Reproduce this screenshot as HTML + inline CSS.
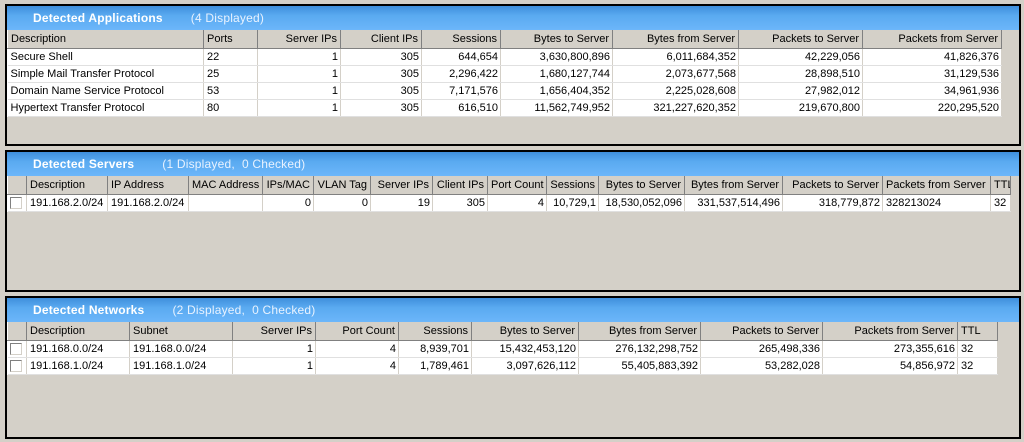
<!DOCTYPE html><html><head><style>
*{margin:0;padding:0;box-sizing:border-box}
body{width:1024px;height:442px;background:#d4d0c8;font-family:"Liberation Sans",sans-serif;font-size:11px;position:relative;overflow:hidden}
.p{position:absolute;left:5px;width:1016px;border:2px solid #000;border-top-color:#000;background:#d4d0c8}
.h{height:24px;background:linear-gradient(#3f8fdc,#5aaaf0 40%,#6cb6fa);color:#fff;font-weight:bold;font-size:12px;line-height:24px;padding-left:26px;white-space:pre;letter-spacing:.2px}
.h span{font-weight:normal;color:#e8f2ff;margin-left:28px}
table{position:absolute;left:0;border-collapse:collapse;table-layout:fixed;background:#fff}
th{height:18px;background:#d4d0c8;font-weight:normal;text-align:left;padding:0 3px;border-right:1px solid #808080;border-left:1px solid #fff;border-bottom:1px solid #808080;white-space:nowrap;overflow:hidden}
td{height:17px;padding:0 2px 0 3px;border-right:1px solid #d4d0c8;border-bottom:1px solid #e0e0e0;white-space:nowrap;overflow:hidden}
.r{text-align:right}
.cb{display:inline-block;width:12px;height:12px;border:1px solid #808080;border-right-color:#d4d0c8;border-bottom-color:#d4d0c8;background:#fff;vertical-align:middle}
</style></head><body>
<div class="p" style="top:4px;height:142px">
<div class="h">Detected Applications<span>(4 Displayed)</span></div>
<table style="top:24px;width:994px">
<col style="width:196px"><col style="width:54px"><col style="width:83px"><col style="width:81px"><col style="width:79px"><col style="width:112px"><col style="width:126px"><col style="width:124px"><col style="width:139px">
<tr><th>Description</th><th>Ports</th><th class="r">Server IPs</th><th class="r">Client IPs</th><th class="r">Sessions</th><th class="r">Bytes to Server</th><th class="r">Bytes from Server</th><th class="r">Packets to Server</th><th class="r">Packets from Server</th></tr>
<tr><td>Secure Shell</td><td>22</td><td class="r">1</td><td class="r">305</td><td class="r">644,654</td><td class="r">3,630,800,896</td><td class="r">6,011,684,352</td><td class="r">42,229,056</td><td class="r">41,826,376</td></tr>
<tr><td>Simple Mail Transfer Protocol</td><td>25</td><td class="r">1</td><td class="r">305</td><td class="r">2,296,422</td><td class="r">1,680,127,744</td><td class="r">2,073,677,568</td><td class="r">28,898,510</td><td class="r">31,129,536</td></tr>
<tr><td>Domain Name Service Protocol</td><td>53</td><td class="r">1</td><td class="r">305</td><td class="r">7,171,576</td><td class="r">1,656,404,352</td><td class="r">2,225,028,608</td><td class="r">27,982,012</td><td class="r">34,961,936</td></tr>
<tr><td>Hypertext Transfer Protocol</td><td>80</td><td class="r">1</td><td class="r">305</td><td class="r">616,510</td><td class="r">11,562,749,952</td><td class="r">321,227,620,352</td><td class="r">219,670,800</td><td class="r">220,295,520</td></tr>
</table></div>

<div class="p" style="top:150px;height:142px">
<div class="h">Detected Servers<span>(1 Displayed,  0 Checked)</span></div>
<table style="top:24px;width:1003px">
<col style="width:19px"><col style="width:81px"><col style="width:81px"><col style="width:74px"><col style="width:51px"><col style="width:57px"><col style="width:62px"><col style="width:55px"><col style="width:59px"><col style="width:52px"><col style="width:86px"><col style="width:98px"><col style="width:100px"><col style="width:108px"><col style="width:20px">
<tr><th></th><th>Description</th><th>IP Address</th><th>MAC Address</th><th class="r">IPs/MAC</th><th class="r">VLAN Tag</th><th class="r">Server IPs</th><th class="r">Client IPs</th><th class="r">Port Count</th><th class="r">Sessions</th><th class="r">Bytes to Server</th><th class="r">Bytes from Server</th><th class="r">Packets to Server</th><th>Packets from Server</th><th>TTL</th></tr>
<tr><td style="padding:0 2px"><span class="cb"></span></td><td>191.168.2.0/24</td><td>191.168.2.0/24</td><td></td><td class="r">0</td><td class="r">0</td><td class="r">19</td><td class="r">305</td><td class="r">4</td><td class="r">10,729,1</td><td class="r">18,530,052,096</td><td class="r">331,537,514,496</td><td class="r">318,779,872</td><td>328213024</td><td>32</td></tr>
</table></div>

<div class="p" style="top:296px;height:143px">
<div class="h">Detected Networks<span>(2 Displayed,  0 Checked)</span></div>
<table style="top:24px;width:990px">
<col style="width:19px"><col style="width:103px"><col style="width:103px"><col style="width:83px"><col style="width:83px"><col style="width:73px"><col style="width:107px"><col style="width:122px"><col style="width:122px"><col style="width:135px"><col style="width:40px">
<tr><th></th><th>Description</th><th>Subnet</th><th class="r">Server IPs</th><th class="r">Port Count</th><th class="r">Sessions</th><th class="r">Bytes to Server</th><th class="r">Bytes from Server</th><th class="r">Packets to Server</th><th class="r">Packets from Server</th><th>TTL</th></tr>
<tr><td style="padding:0 2px"><span class="cb"></span></td><td>191.168.0.0/24</td><td>191.168.0.0/24</td><td class="r">1</td><td class="r">4</td><td class="r">8,939,701</td><td class="r">15,432,453,120</td><td class="r">276,132,298,752</td><td class="r">265,498,336</td><td class="r">273,355,616</td><td>32</td></tr>
<tr><td style="padding:0 2px"><span class="cb"></span></td><td>191.168.1.0/24</td><td>191.168.1.0/24</td><td class="r">1</td><td class="r">4</td><td class="r">1,789,461</td><td class="r">3,097,626,112</td><td class="r">55,405,883,392</td><td class="r">53,282,028</td><td class="r">54,856,972</td><td>32</td></tr>
</table></div>
</body></html>
